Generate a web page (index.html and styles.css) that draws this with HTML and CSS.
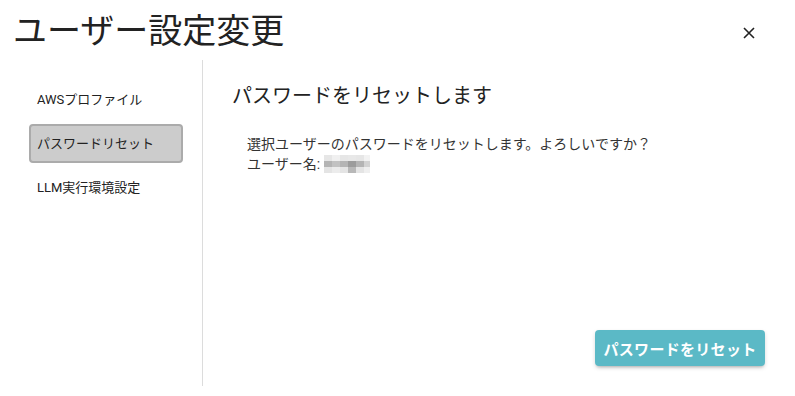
FILE: index.html
```html
<!DOCTYPE html>
<html lang="ja">
<head>
    <meta charset="UTF-8">
    <title>ユーザー設定変更</title>
    <link rel="stylesheet" href="styles.css">
</head>
<body>
    <div class="dialog">
        <div class="dialog-header">
            <h1>ユーザー設定変更</h1>
            <button class="close-btn" aria-label="close">
                <svg width="12" height="12" viewBox="0 0 12 12">
                    <path d="M1 1 L11 11 M11 1 L1 11" stroke="#222" stroke-width="1.6" fill="none"/>
                </svg>
            </button>
        </div>
        <div class="dialog-body">
            <div class="side-menu">
                <div class="menu-item">AWSプロファイル</div>
                <div class="menu-item active">パスワードリセット</div>
                <div class="menu-item">LLM実行環境設定</div>
            </div>
            <div class="panel">
                <h2>パスワードをリセットします</h2>
                <div class="message">
                    <div>選択ユーザーのパスワードをリセットします。よろしいですか？</div>
                    <div>ユーザー名: <span class="masked"><i></i><i></i><i></i><i></i><i></i><i></i></span></div>
                </div>
                <div class="actions">
                    <button class="reset-btn">パスワードをリセット</button>
                </div>
            </div>
        </div>
    </div>
</body>
</html>
```
FILE: styles.css
```css
body {
    margin: 0;
    font-family: Roboto, "Noto Sans CJK JP", sans-serif;
    color: #222;
    background: #fff;
}

.dialog {
    width: 795px;
    height: 396px;
    display: flex;
    flex-direction: column;
}

.dialog-header {
    display: flex;
    align-items: center;
    justify-content: space-between;
    height: 60px;
    padding: 0 36px 0 13px;
}

.dialog-header h1 {
    margin: 0;
    font-size: 34px;
    font-weight: 400;
    line-height: 40px;
    margin-top: 2px;
}

.close-btn {
    border: none;
    background: none;
    padding: 0;
    width: 20px;
    height: 20px;
    display: flex;
    align-items: center;
    justify-content: center;
    margin-top: 6px;
}

.dialog-body {
    display: flex;
    height: 326px;
}

.side-menu {
    width: 154px;
    padding: 20px 19px 0 29px;
    border-right: 1px solid #dcdcdc;
    display: flex;
    flex-direction: column;
    gap: 5px;
}

.menu-item {
    height: 35px;
    line-height: 35px;
    padding: 0 6px;
    border: 2px solid transparent;
    border-radius: 4px;
    font-size: 13px;
    color: #222;
}

.menu-item.active {
    background: #cccccc;
    border-color: #ababab;
}

.panel {
    flex: 1;
    display: flex;
    flex-direction: column;
    padding: 22px 30px 20px 29px;
}

.panel h2 {
    margin: 0;
    font-size: 20px;
    font-weight: 400;
    line-height: 28px;
}

.message {
    margin-top: 24px;
    padding-left: 15px;
    font-size: 14px;
    line-height: 20px;
    color: #333;
}

.masked {
    display: inline-flex;
    vertical-align: -4px;
    height: 18px;
}

.masked i {
    width: 8px;
    height: 18px;
    background: linear-gradient(#e6e6e6 0 33%, #b4b4b4 33% 66%, #e4e4e4 66%);
}

.masked i:nth-child(2) { background: linear-gradient(#f0f0f0 0 33%, #c2c2c2 33% 66%, #ececec 66%); }
.masked i:nth-child(4) { background: linear-gradient(#e8e8e8 0 33%, #9c9c9c 33% 66%, #b8b8b8 66%); }
.masked i:nth-child(6) { width: 6px; background: linear-gradient(#f2f2f2 0 33%, #d2d2d2 33% 66%, #efefef 66%); }

.actions {
    margin-top: auto;
    display: flex;
    justify-content: flex-end;
}

.reset-btn {
    width: 170px;
    height: 36px;
    border: none;
    border-radius: 4px;
    background: #5bb9c6;
    color: #fff;
    font-family: Roboto, "Noto Sans CJK JP", sans-serif;
    font-size: 15px;
    font-weight: 700;
    letter-spacing: 0.3px;
    box-shadow: 0 3px 3px -2px rgba(0, 0, 0, 0.2), 0 2px 4px rgba(0, 0, 0, 0.14);
}
```
